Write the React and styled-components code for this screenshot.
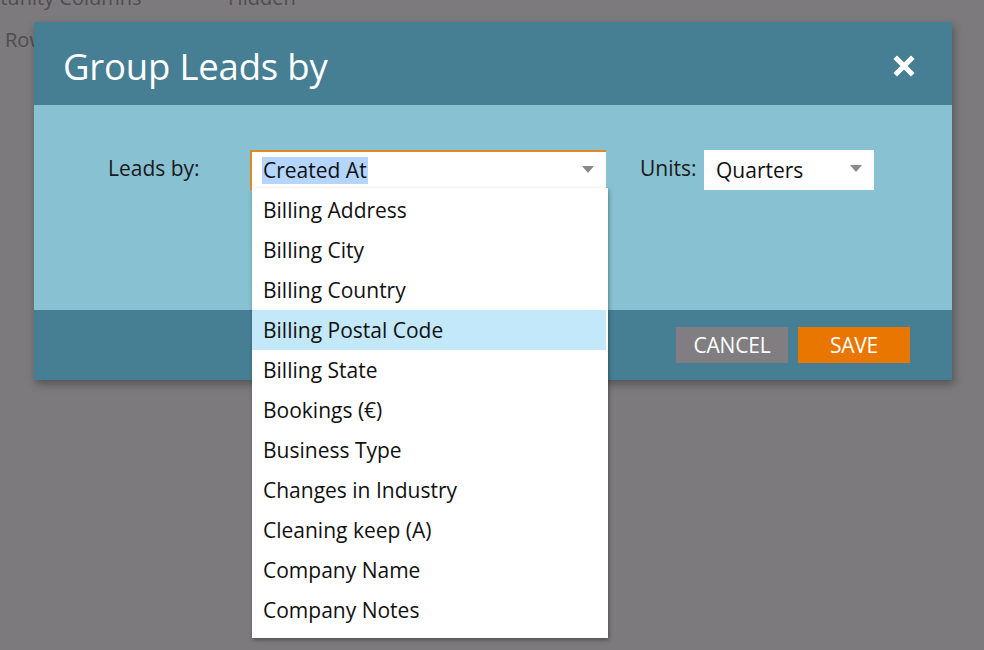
import React from "react";
import styled, { createGlobalStyle } from "styled-components";

const Global = createGlobalStyle`
  html, body { margin: 0; padding: 0; }
  body {
    width: 984px;
    height: 650px;
    overflow: hidden;
    background: #7c7a7c;
    font-family: "Open Sans", "Noto Sans", sans-serif;
  }
`;

const Page = styled.div`
  position: relative;
  width: 984px;
  height: 650px;
  background: #7c7a7c;
  overflow: hidden;
`;

const BgTable = styled.div`
  display: flex;
  flex-direction: column;
  margin-top: -24px;
  color: #4f4d4f;
  font-size: 20px;
`;

const BgRow = styled.div`
  display: grid;
  grid-template-columns: 228px 1fr;
  height: 42px;
  align-items: center;
  margin-left: ${(p) => p.$shift || 5}px;
`;

const Modal = styled.div`
  position: absolute;
  left: 34px;
  top: 22px;
  width: 918px;
  display: flex;
  flex-direction: column;
  box-shadow: 2px 4px 8px rgba(40, 40, 40, 0.45);
`;

const Header = styled.div`
  height: 83px;
  background: #467e93;
  display: flex;
  align-items: center;
  justify-content: space-between;
  padding: 0 36px 0 29px;
`;

const Title = styled.h1`
  margin: 0;
  color: #ffffff;
  font-size: 36.5px;
  font-weight: 400;
  letter-spacing: -0.2px;
  padding-top: 5px;
`;

const Close = styled.button`
  border: 0;
  background: transparent;
  padding: 0;
  width: 24px;
  height: 24px;
  display: flex;
  align-items: center;
  justify-content: center;
  margin-top: 4px;
`;

const Body = styled.div`
  height: 205px;
  background: #88c1d2;
  box-sizing: border-box;
  padding: 45px 0 0 74px;
`;

const FieldRow = styled.div`
  display: flex;
  align-items: center;
`;

const Label = styled.span`
  width: ${(p) => p.$w}px;
  color: #1a1a1a;
  font-size: 21px;
  margin-top: -4px;
`;

const SelectWrap = styled.div`
  position: relative;
  width: ${(p) => p.$w}px;
`;

const Select = styled.div`
  box-sizing: border-box;
  height: 40px;
  background: #ffffff;
  display: flex;
  align-items: center;
  justify-content: space-between;
  padding: 0 6px 0 ${(p) => (p.$focus ? 10 : 11)}px;
  border-top: ${(p) => (p.$focus ? "2px solid #e08a22" : "0")};
  border-left: ${(p) => (p.$focus ? "2px solid #e08a22" : "0")};
  font-size: 21px;
  color: #111;
`;

const Value = styled.span`
  background: ${(p) => (p.$selected ? "#b4d5fc" : "transparent")};
  line-height: 27px;
  padding: 0 1px;
  margin-top: ${(p) => (p.$focus ? "-2px" : "0")};
`;

const Arrow = styled.span`
  width: 0;
  height: 0;
  border-left: 6px solid transparent;
  border-right: 6px solid transparent;
  border-top: 7px solid #8a8a8a;
  margin-right: 6px;
  margin-top: -4px;
`;

const Gap = styled.div`
  width: ${(p) => p.$w}px;
  flex-shrink: 0;
`;

const Menu = styled.ul`
  position: absolute;
  left: 2px;
  top: 38px;
  width: 356px;
  margin: 0;
  padding: 2px 0 8px;
  list-style: none;
  background: #ffffff;
  box-shadow: 1px 2px 4px rgba(0, 0, 0, 0.35);
  z-index: 5;
`;

const Item = styled.li`
  height: 40px;
  display: flex;
  align-items: center;
  padding-left: 11px;
  margin-right: 2px;
  font-size: 21px;
  color: #111;
  background: ${(p) => (p.$active ? "#c2e8f9" : "transparent")};
`;

const Footer = styled.div`
  height: 70px;
  background: #467e93;
  display: flex;
  justify-content: flex-end;
  align-items: center;
  gap: 10px;
  padding-right: 42px;
`;

const Button = styled.button`
  width: 112px;
  height: 36px;
  border: 0;
  color: #ffffff;
  font-family: "Open Sans", "Noto Sans", sans-serif;
  font-size: 21px;
  letter-spacing: -0.2px;
  background: ${(p) => (p.$primary ? "#e97600" : "#807e80")};
  padding: 0;
`;

const items = [
  "Billing Address",
  "Billing City",
  "Billing Country",
  "Billing Postal Code",
  "Billing State",
  "Bookings (€)",
  "Business Type",
  "Changes in Industry",
  "Cleaning keep (A)",
  "Company Name",
  "Company Notes",
];

export default function App() {
  return (
    <Page>
      <Global />
      <BgTable>
        <BgRow $shift={-60}>
          <span>Opportunity Columns</span>
          <span style={{ marginLeft: 60 }}>Hidden</span>
        </BgRow>
        <BgRow>
          <span>Row</span>
          <span />
        </BgRow>
      </BgTable>
      <Modal>
        <Header>
          <Title>Group Leads by</Title>
          <Close aria-label="close">
            <svg width="22" height="22" viewBox="0 0 22 22">
              <path d="M4 4 L18 18 M18 4 L4 18" stroke="#fff" strokeWidth="5" strokeLinecap="square" />
            </svg>
          </Close>
        </Header>
        <Body>
          <FieldRow>
            <Label $w={142}>Leads by:</Label>
            <SelectWrap $w={356}>
              <Select $focus>
                <Value $selected $focus>Created At</Value>
                <Arrow />
              </Select>
              <Menu>
                {items.map((t, i) => (
                  <Item key={t} $active={i === 3}>{t}</Item>
                ))}
              </Menu>
            </SelectWrap>
            <Gap $w={34} />
            <Label $w={64}>Units:</Label>
            <SelectWrap $w={170}>
              <Select>
                <Value>Quarters</Value>
                <Arrow />
              </Select>
            </SelectWrap>
          </FieldRow>
        </Body>
        <Footer>
          <Button>CANCEL</Button>
          <Button $primary>SAVE</Button>
        </Footer>
      </Modal>
    </Page>
  );
}
